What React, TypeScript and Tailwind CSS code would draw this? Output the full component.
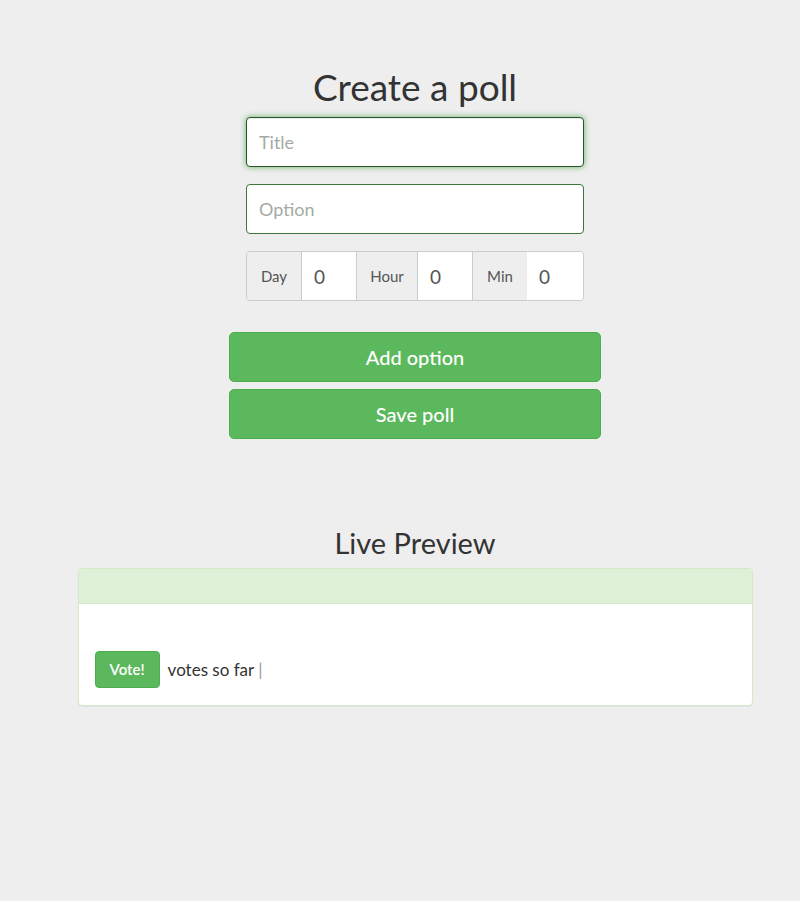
import React from "react";

const font = { fontFamily: "Lato, 'Open Sans', sans-serif" };

function TimeAddon({ label, w }: { label: string; w: string }) {
  return (
    <span className={`flex items-center justify-center bg-[#eeeeee] text-[15px] text-[#555] ${w}`}>
      {label}
    </span>
  );
}

function TimeInput({ w }: { w: string }) {
  return (
    <input
      defaultValue="0"
      className={`h-full bg-white px-3 text-[19px] text-[#555] outline-none border-x border-[#cccccc] ${w}`}
    />
  );
}

export default function App() {
  return (
    <div className="min-h-[901px] bg-[#eeeeee] pl-[30px] text-[#333]" style={font}>
      <div className="flex flex-col items-center pt-[64px]">
        <h1 className="text-[37px] leading-[46px] text-[#333]">Create a poll</h1>

        <div className="mt-[7px] flex w-[338px] flex-col gap-[17px]">
          <input
            placeholder="Title"
            autoFocus
            className="h-[50px] rounded-[4px] border border-[#2b542c] bg-white px-3 text-[18px] text-[#333] outline-none shadow-[inset_0_1px_1px_rgba(0,0,0,0.075),0_0_6px_#67b168] placeholder:text-[#a3aba3]"
          />
          <input
            placeholder="Option"
            className="h-[50px] rounded-[4px] border border-[#3c763d] bg-white px-3 text-[18px] text-[#333] outline-none placeholder:text-[#a3aba3]"
          />
          <div className="flex h-[50px] overflow-hidden rounded-[4px] border border-[#cccccc]">
            <TimeAddon label="Day" w="w-[54px]" />
            <TimeInput w="w-[56px]" />
            <TimeAddon label="Hour" w="w-[60px]" />
            <TimeInput w="w-[56px]" />
            <TimeAddon label="Min" w="w-[54px]" />
            <input
              defaultValue="0"
              className="h-full w-[56px] bg-white px-3 text-[19px] text-[#555] outline-none"
            />
          </div>
        </div>

        <div className="mt-[31px] flex w-[372px] flex-col gap-[7px]">
          <button className="h-[50px] rounded-[5px] border border-[#4cae4c] bg-[#5cb85c] text-[20px] font-medium text-white">
            Add option
          </button>
          <button className="h-[50px] rounded-[5px] border border-[#4cae4c] bg-[#5cb85c] text-[20px] font-medium text-white">
            Save poll
          </button>
        </div>

        <h2 className="mt-[86px] text-[29px] leading-[36px] text-[#333]">Live Preview</h2>

        <div className="mt-[7px] w-[675px] overflow-hidden rounded-[4px] border border-[#d6e9c6] bg-white shadow-[0_1px_1px_rgba(0,0,0,0.05)]">
          <div className="h-[35px] border-b border-[#d6e9c6] bg-[#dff0d8]" />
          <div className="flex items-center px-4 pb-[17px] pt-[47px]">
            <button className="h-[37px] rounded-[4px] border border-[#4cae4c] bg-[#5cb85c] px-[14px] text-[15px] font-semibold text-white">
              Vote!
            </button>
            <span className="ml-2 text-[17px] text-[#333]">
              votes so far <span className="text-[#999]">|</span>
            </span>
          </div>
        </div>
      </div>
    </div>
  );
}
